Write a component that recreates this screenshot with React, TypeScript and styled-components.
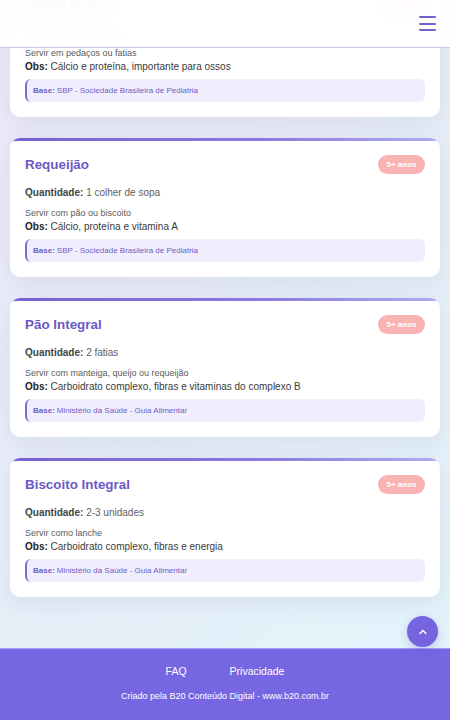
import React from "react";
import styled, { createGlobalStyle } from "styled-components";

const GlobalStyle = createGlobalStyle`
  html, body { margin: 0; padding: 0; }
  body {
    font-family: "Liberation Sans", Arial, sans-serif;
    background: linear-gradient(135deg, #ebe9f7 0%, #e7eef8 50%, #e2f4fb 100%);
    overflow: hidden;
  }
  * { box-sizing: border-box; }
`;

const Viewport = styled.div`
  height: 100vh;
  overflow: hidden;
  display: flex;
  flex-direction: column;
  justify-content: flex-end;
`;

const Header = styled.header`
  position: fixed;
  top: 0;
  left: 0;
  right: 0;
  height: 48px;
  background: rgba(255, 255, 255, 0.93);
  backdrop-filter: blur(14px);
  border-bottom: 1px solid #cdc6ea;
  display: flex;
  align-items: center;
  justify-content: flex-end;
  padding-right: 14px;
  z-index: 10;
`;

const MenuButton = styled.button`
  width: 17px;
  height: 15px;
  padding: 0;
  border: none;
  background: transparent;
  display: flex;
  flex-direction: column;
  justify-content: space-between;
`;

const MenuLine = styled.span`
  display: block;
  height: 2px;
  width: 100%;
  background: #7463c6;
  border-radius: 1px;
`;

const Main = styled.main`
  display: flex;
  flex-direction: column;
  gap: 21px;
  padding: 0 10px 51px;
`;

const Card = styled.article`
  position: relative;
  background: #ffffff;
  border-radius: 10px;
  padding: 18px 15px 15px;
  height: 139px;
  box-shadow: 0 6px 22px rgba(110, 110, 170, 0.14);
  overflow: hidden;
  &::before {
    content: "";
    position: absolute;
    top: 0;
    left: 0;
    right: 0;
    height: 3px;
    background: linear-gradient(90deg, #7461d6 0%, #8b7be0 60%, #b3aaf0 100%);
  }
`;

const CardHead = styled.div`
  display: flex;
  justify-content: space-between;
  align-items: center;
  height: 17px;
  margin-bottom: 14px;
`;

const Title = styled.h3`
  margin: 0;
  font-size: 13.4px;
  font-weight: 700;
  color: #6c58c6;
`;

const Badge = styled.span`
  background: #f9b3b3;
  color: #ffffff;
  font-size: 8px;
  font-weight: 700;
  padding: 5px 8.5px;
  border-radius: 12px;
  line-height: 9px;
  margin-top: -1px;
`;

const Quantity = styled.p`
  margin: 0 0 9px;
  font-size: 10px;
  line-height: 12px;
  color: #5e5e5e;
  b { color: #444444; font-weight: 700; }
`;

const Serve = styled.p`
  margin: 0 0 2px;
  font-size: 9px;
  line-height: 11px;
  color: #5a5a5a;
`;

const Obs = styled.p`
  margin: 0 0 6px;
  font-size: 10px;
  line-height: 12px;
  color: #3a3a3a;
  b { color: #222222; font-weight: 700; }
`;

const Base = styled.div`
  background: #f0eefc;
  border-left: 2px solid #7b6bcf;
  border-radius: 6px;
  height: 23px;
  padding: 0 6px;
  display: flex;
  align-items: center;
  font-size: 8px;
  color: #6d5fc4;
  b { font-weight: 700; margin-right: 2px; }
`;

const Footer = styled.footer`
  background: #7766e1;
  border-top: 1px solid #a89ef0;
  height: 72px;
  display: flex;
  flex-direction: column;
  align-items: center;
  padding-top: 16px;
  flex-shrink: 0;
`;

const FooterLinks = styled.nav`
  display: flex;
  gap: 43px;
  margin-bottom: 14px;
`;

const FooterLink = styled.a`
  color: #ffffff;
  font-size: 10.5px;
  text-decoration: none;
`;

const Credits = styled.p`
  margin: 0;
  color: #ffffff;
  font-size: 9px;
`;

const ScrollTop = styled.button`
  position: fixed;
  right: 12px;
  bottom: 73px;
  width: 31px;
  height: 31px;
  border-radius: 50%;
  border: none;
  background: #7563e0;
  box-shadow: 0 3px 10px rgba(90, 70, 200, 0.25);
  display: flex;
  align-items: center;
  justify-content: center;
  padding: 0;
  z-index: 11;
`;

type Food = {
  name: string;
  qty: string;
  serve: string;
  obs: string;
  base: string;
};

const foods: Food[] = [
  {
    name: "Queijo Branco",
    qty: "1-2 fatias",
    serve: "Servir em pedaços ou fatias",
    obs: "Cálcio e proteína, importante para ossos",
    base: "SBP - Sociedade Brasileira de Pediatria",
  },
  {
    name: "Requeijão",
    qty: "1 colher de sopa",
    serve: "Servir com pão ou biscoito",
    obs: "Cálcio, proteína e vitamina A",
    base: "SBP - Sociedade Brasileira de Pediatria",
  },
  {
    name: "Pão Integral",
    qty: "2 fatias",
    serve: "Servir com manteiga, queijo ou requeijão",
    obs: "Carboidrato complexo, fibras e vitaminas do complexo B",
    base: "Ministério da Saúde - Guia Alimentar",
  },
  {
    name: "Biscoito Integral",
    qty: "2-3 unidades",
    serve: "Servir como lanche",
    obs: "Carboidrato complexo, fibras e energia",
    base: "Ministério da Saúde - Guia Alimentar",
  },
];

export default function App() {
  return (
    <>
      <GlobalStyle />
      <Header>
        <MenuButton aria-label="Menu">
          <MenuLine />
          <MenuLine />
          <MenuLine />
        </MenuButton>
      </Header>
      <Viewport>
        <Main>
          {foods.map((f) => (
            <Card key={f.name}>
              <CardHead>
                <Title>{f.name}</Title>
                <Badge>5+ anos</Badge>
              </CardHead>
              <Quantity>
                <b>Quantidade:</b> {f.qty}
              </Quantity>
              <Serve>{f.serve}</Serve>
              <Obs>
                <b>Obs:</b> {f.obs}
              </Obs>
              <Base>
                <b>Base:</b> {f.base}
              </Base>
            </Card>
          ))}
        </Main>
        <Footer>
          <FooterLinks>
            <FooterLink href="#">FAQ</FooterLink>
            <FooterLink href="#">Privacidade</FooterLink>
          </FooterLinks>
          <Credits>Criado pela B20 Conteúdo Digital - www.b20.com.br</Credits>
        </Footer>
      </Viewport>
      <ScrollTop aria-label="Voltar ao topo">
        <svg width="12" height="12" viewBox="0 0 24 24" fill="none" stroke="#fff" strokeWidth="3" strokeLinecap="round" strokeLinejoin="round">
          <path d="M6 15l6-6 6 6" />
        </svg>
      </ScrollTop>
    </>
  );
}
